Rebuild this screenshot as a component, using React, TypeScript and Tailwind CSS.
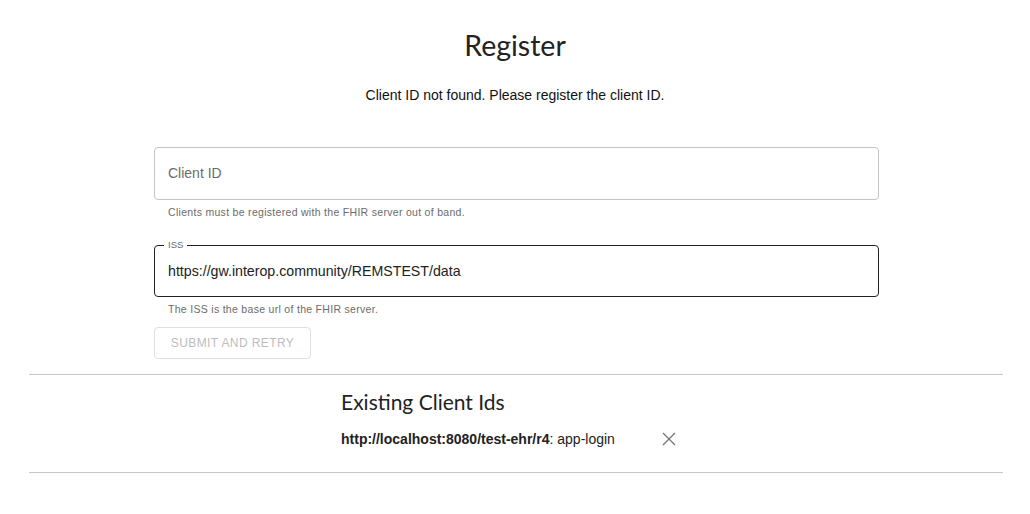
import React from "react";

const XIcon = () => (
    <svg width="14" height="14" viewBox="0 0 14 14" fill="none" stroke="#757575" strokeWidth="1.3">
        <path d="M1 1 13 13M13 1 1 13" />
    </svg>
);

const App = () => {
    return (
        <div className="w-full h-[514px] bg-white font-['Liberation_Sans',Arial,sans-serif] text-[#212121] overflow-hidden">
            {/* Header */}
            <div className="flex flex-col items-center pt-[28px]">
                <h1 className="font-['Lato',sans-serif] text-[28.5px] leading-[34px] text-[#222]">Register</h1>
                <p className="mt-[25px] text-[14px] leading-[16px] text-[#111]">Client ID not found. Please register the client ID.</p>
            </div>

            {/* Form */}
            <div className="w-[725px] ml-[154px] mt-[44px]">
                <div className="h-[53px] border border-[#c4c4c4] rounded-[4px] flex items-center px-[13px]">
                    <span className="text-[14px] text-[#6b6b6b]">Client ID</span>
                </div>
                <p className="mt-[6px] px-[14px] text-[10.5px] leading-[12px] text-[#6b6b6b] tracking-[0.3px]">Clients must be registered with the FHIR server out of band.</p>

                <div className="relative mt-[27px] h-[52px] border border-[#222] rounded-[4px] flex items-center px-[13px]">
                    <span className="absolute -top-[7px] left-[9px] bg-white px-[4px] text-[9.5px] leading-[12px] text-[#6b6b6b]">ISS</span>
                    <span className="text-[14.2px] text-[#222] mt-[1px]">https://gw.interop.community/REMSTEST/data</span>
                </div>
                <p className="mt-[6px] px-[14px] text-[10.5px] leading-[12px] text-[#6b6b6b] tracking-[0.3px]">The ISS is the base url of the FHIR server.</p>

                <button className="mt-[12px] w-[157px] h-[32px] border border-[#e0e0e0] rounded-[4px] text-[12px] tracking-[0.4px] text-[#bdbdbd]">SUBMIT AND RETRY</button>
            </div>

            {/* Existing */}
            <div className="ml-[29px] mr-[27px] mt-[15px] border-t border-[#c8c8c8]" />
            <div className="pl-[341px] pt-[14px] pb-[25px]">
                <h2 className="font-['Lato',sans-serif] text-[21px] leading-[26px] text-[#222]">Existing Client Ids</h2>
                <div className="mt-[16px] flex items-center text-[14px] leading-[16px] text-[#222]">
                    <span><b>http://localhost:8080/test-ehr/r4</b>: app-login</span>
                    <span className="ml-[47px] flex"><XIcon /></span>
                </div>
            </div>
            <div className="ml-[29px] mr-[27px] border-t border-[#c8c8c8]" />
        </div>
    );
};

export default App;
